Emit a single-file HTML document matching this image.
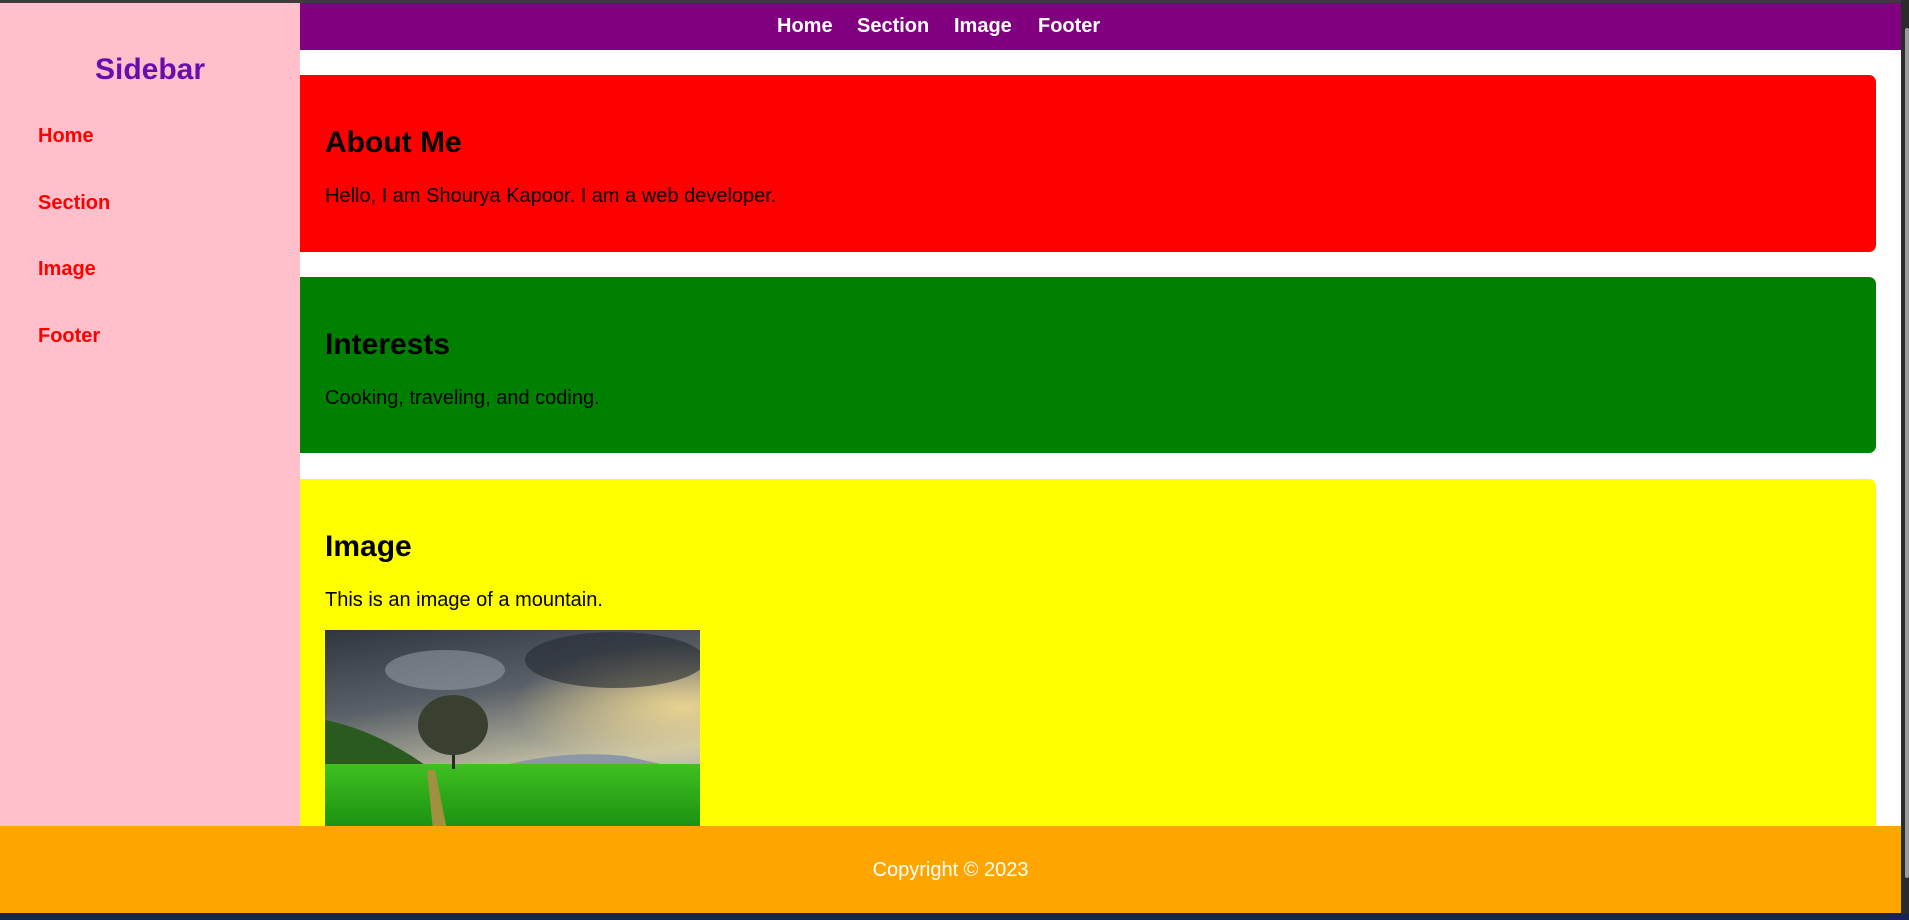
<!DOCTYPE html>
<html><head><meta charset="utf-8"><style>
*{margin:0;padding:0;box-sizing:border-box}
html,body{width:1909px;height:920px;overflow:hidden;background:#fff;font-family:"Liberation Sans",Arial,sans-serif}
.a{position:absolute;white-space:nowrap}
.box{position:absolute;left:300px;width:1576px;border-radius:0 7px 7px 0}
.h{position:absolute;left:25px;font-size:30px;font-weight:bold;line-height:30px;color:#000}
.p{position:absolute;left:25px;font-size:20px;line-height:22px;color:#000}
.sl{position:absolute;left:38px;font-size:20px;font-weight:bold;line-height:22px;color:#f00}
.nl{position:absolute;top:15px;font-size:20px;font-weight:bold;line-height:22px;color:#fff}
</style></head><body>
<div class="a" style="left:0;top:0;width:1909px;height:3px;background:#3c3c3c"></div>
<div class="a" style="left:300px;top:3px;width:1601px;height:47px;background:#800080"></div>
<div class="nl" style="left:777px">Home</div>
<div class="nl" style="left:857px">Section</div>
<div class="nl" style="left:954px">Image</div>
<div class="nl" style="left:1038px">Footer</div>

<div class="a" style="left:0;top:3px;width:300px;height:823px;background:#ffc0cb"></div>
<div class="a" style="left:0;top:55px;width:300px;text-align:center;font-size:30px;font-weight:bold;line-height:30px;color:#6a0dad">Sidebar</div>
<div class="sl" style="top:125px">Home</div>
<div class="sl" style="top:192px">Section</div>
<div class="sl" style="top:258px">Image</div>
<div class="sl" style="top:325px">Footer</div>

<div class="box" style="top:75px;height:177px;background:#f00">
<div class="h" style="top:53px">About Me</div>
<div class="p" style="top:110px">Hello, I am Shourya Kapoor. I am a web developer.</div>
</div>
<div class="box" style="top:277px;height:176px;background:#008000">
<div class="h" style="top:53px">Interests</div>
<div class="p" style="top:110px">Cooking, traveling, and coding.</div>
</div>
<div class="box" style="top:479px;height:400px;background:#ff0">
<div class="h" style="top:53px">Image</div>
<div class="p" style="top:110px">This is an image of a mountain.</div>
<svg style="position:absolute;left:25px;top:151px" width="375" height="200" viewBox="0 0 375 200">
<defs>
<linearGradient id="sky" x1="0" y1="0" x2="0.3" y2="1"><stop offset="0" stop-color="#30363e"/><stop offset="0.4" stop-color="#5a6068"/><stop offset="0.8" stop-color="#c8c4a8"/><stop offset="1" stop-color="#a8b0b8"/></linearGradient>
<radialGradient id="sun" cx="0.95" cy="0.55" r="0.45"><stop offset="0" stop-color="#f0d890" stop-opacity="0.9"/><stop offset="1" stop-color="#f0d890" stop-opacity="0"/></radialGradient>
<linearGradient id="gr" x1="0" y1="0" x2="0" y2="1"><stop offset="0" stop-color="#40c020"/><stop offset="1" stop-color="#189010"/></linearGradient>
</defs>
<rect width="375" height="200" fill="url(#sky)"/>
<rect width="375" height="140" fill="url(#sun)"/>
<ellipse cx="120" cy="40" rx="60" ry="20" fill="#a0a6ae" opacity="0.5"/>
<ellipse cx="290" cy="30" rx="90" ry="28" fill="#252a32" opacity="0.6"/>
<path d="M0 90 Q50 100 100 135 L0 135Z" fill="#2a5a20"/>
<path d="M180 135 Q240 120 300 126 L340 135Z" fill="#8a98a8"/>
<rect y="134" width="375" height="66" fill="url(#gr)"/>
<path d="M102 140 L108 200 L122 200 L110 140Z" fill="#a09040"/>
<rect x="127" y="105" width="3" height="34" fill="#2a2a1a"/>
<ellipse cx="128" cy="95" rx="35" ry="30" fill="#3a4030"/>
</svg>
</div>

<div class="a" style="left:0;top:826px;width:1901px;height:87px;background:#ffa500"></div>
<div class="a" style="left:0;top:859px;width:1901px;text-align:center;font-size:20px;line-height:22px;color:#fff">Copyright © 2023</div>
<div class="a" style="left:0;top:913px;width:1909px;height:7px;background:#1a2450"></div>
<div class="a" style="left:1901px;top:0;width:8px;height:913px;background:#2b2b2b"></div>
<div class="a" style="left:1905px;top:28px;width:4px;height:850px;background:#9a9a9a;border-radius:2px"></div>
</body></html>
